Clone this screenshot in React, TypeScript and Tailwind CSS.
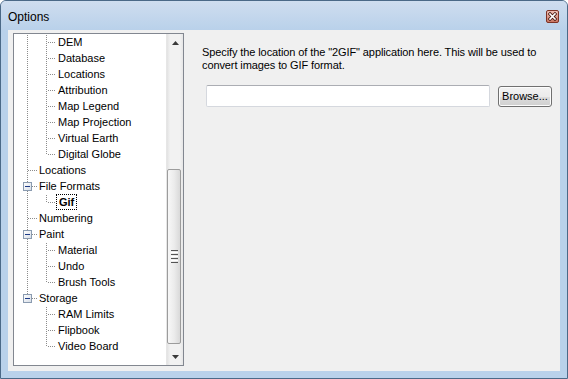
import React from "react";

type Kind = "pipe" | "tee" | "ell" | "blank" | "boxtee" | "boxell";

const DOT = "#8c8c8c";

function TreeCell({ kind, start }: { kind: Kind; start: number }) {
  const rects: React.ReactElement[] = [];
  const v = (y0: number, y1: number) => {
    for (let y = y0; y <= y1; y += 2) rects.push(<rect key={`v${y}`} x={9} y={y} width={1} height={1} fill={DOT} />);
  };
  const h = (x0: number, x1: number) => {
    for (let x = x0; x <= x1; x++) {
      if ((start + x) % 2 === 0) rects.push(<rect key={`h${x}`} x={x} y={8} width={1} height={1} fill={DOT} />);
    }
  };
  let box = false;
  if (kind === "pipe") v(1, 15);
  if (kind === "tee") {
    v(1, 15);
    h(10, 18);
  }
  if (kind === "ell") {
    v(1, 7);
    h(10, 18);
  }
  if (kind === "boxtee") {
    v(1, 3);
    v(13, 15);
    h(14, 18);
    box = true;
  }
  if (kind === "boxell") {
    v(1, 3);
    h(14, 18);
    box = true;
  }
  return (
    <svg width={19} height={16} className="block shrink-0" shapeRendering="crispEdges">
      <defs>
        <linearGradient id="bx" x1="0" y1="0" x2="1" y2="1">
          <stop offset="0" stopColor="#ffffff" />
          <stop offset="1" stopColor="#d6dde6" />
        </linearGradient>
      </defs>
      {rects}
      {box && (
        <>
          <rect x={5.5} y={4.5} width={8} height={8} fill="url(#bx)" stroke="#8a9bb0" />
          <rect x={7} y={8} width={5} height={1} fill="#1c3a86" />
        </>
      )}
    </svg>
  );
}

type Row = { label: string; cells: Kind[]; focus?: boolean };

const rows: Row[] = [
  { label: "DEM", cells: ["pipe", "tee"] },
  { label: "Database", cells: ["pipe", "tee"] },
  { label: "Locations", cells: ["pipe", "tee"] },
  { label: "Attribution", cells: ["pipe", "tee"] },
  { label: "Map Legend", cells: ["pipe", "tee"] },
  { label: "Map Projection", cells: ["pipe", "tee"] },
  { label: "Virtual Earth", cells: ["pipe", "tee"] },
  { label: "Digital Globe", cells: ["pipe", "ell"] },
  { label: "Locations", cells: ["tee"] },
  { label: "File Formats", cells: ["boxtee"] },
  { label: "Gif", cells: ["pipe", "ell"], focus: true },
  { label: "Numbering", cells: ["tee"] },
  { label: "Paint", cells: ["boxtee"] },
  { label: "Material", cells: ["pipe", "tee"] },
  { label: "Undo", cells: ["pipe", "tee"] },
  { label: "Brush Tools", cells: ["pipe", "ell"] },
  { label: "Storage", cells: ["boxell"] },
  { label: "RAM Limits", cells: ["blank", "tee"] },
  { label: "Flipbook", cells: ["blank", "tee"] },
  { label: "Video Board", cells: ["blank", "ell"] },
];

function CloseButton() {
  return (
    <svg width={13} height={13} className="block">
      <defs>
        <linearGradient id="cb" x1="0" y1="0" x2="0" y2="1">
          <stop offset="0" stopColor="#efc2b8" />
          <stop offset="0.5" stopColor="#dd9c8e" />
          <stop offset="1" stopColor="#c8735f" />
        </linearGradient>
      </defs>
      <rect x={0.5} y={0.5} width={12} height={12} rx={1.5} fill="url(#cb)" stroke="#7e3326" />
      <path d="M4 4 L9 9 M9 4 L4 9" stroke="#4a1c14" strokeWidth={3.2} strokeLinecap="square" />
      <path d="M4 4 L9 9 M9 4 L4 9" stroke="#ffffff" strokeWidth={1.6} strokeLinecap="square" />
    </svg>
  );
}

function Arrow({ down }: { down?: boolean }) {
  return (
    <svg width={7} height={4} className="block">
      <polygon points={down ? "0,0 7,0 3.5,4" : "3.5,0 7,4 0,4"} fill="#3a3a3a" />
    </svg>
  );
}

function Scrollbar() {
  return (
    <div className="w-[17px] h-full flex flex-col bg-[linear-gradient(to_right,#e2e2e2,#f2f2f2_20%,#f2f2f2_80%,#e6e6e6)] border-l border-[#e6e6e6]">
      <div className="h-[17px] flex items-center justify-center shrink-0">
        <Arrow />
      </div>
      <div className="flex-1 flex flex-col">
        <div className="h-[118px] shrink-0" />
        <div className="w-[14px] h-[175px] rounded-[2px] border border-[#9c9c9c] bg-[linear-gradient(to_right,#f7f7f7,#ececec_50%,#d9d9d9)] flex items-center justify-center">
          <div className="flex flex-col gap-[1px]">
            <div className="w-[7px] h-[1px] bg-[#555]" />
            <div className="w-[7px] h-[1px] bg-[#fff]" />
            <div className="w-[7px] h-[1px] bg-[#555]" />
            <div className="w-[7px] h-[1px] bg-[#fff]" />
            <div className="w-[7px] h-[1px] bg-[#555]" />
            <div className="w-[7px] h-[1px] bg-[#fff]" />
            <div className="w-[7px] h-[1px] bg-[#555]" />
          </div>
        </div>
      </div>
      <div className="h-[17px] flex items-center justify-center shrink-0">
        <Arrow down />
      </div>
    </div>
  );
}

export default function App() {
  return (
    <div className="w-[568px] h-[379px] font-['Liberation_Sans',Arial,sans-serif] text-black bg-[#b9d1ea] border border-[#4b6987] rounded-t-[6px] flex flex-col overflow-hidden">
      <div className="h-[29px] shrink-0 flex items-center justify-between pl-[7px] pr-[8px] pt-[2px] bg-[linear-gradient(to_bottom,#cfddef,#b9d1ea)]">
        <span className="text-[12px] leading-[14px]">Options</span>
        <CloseButton />
      </div>
      <div className="mx-[7px] h-[341px] bg-[#f0f0f0] flex items-start pt-[3px] pl-[5px]">
        <div className="w-[171px] h-[333px] border border-[#828790] bg-white flex shrink-0">
          <div className="flex-1 flex flex-col pl-[4px] text-[11px] leading-[16px]">
            {rows.map((r, i) => (
              <div key={i} className="h-4 flex items-center">
                {r.cells.map((c, j) => (
                  <TreeCell key={j} kind={c} start={18 + j * 19} />
                ))}
                {r.focus ? (
                  <span className="h-4 px-[2px] border border-dotted border-black font-bold leading-[14px] whitespace-nowrap">{r.label}</span>
                ) : (
                  <span className="h-4 pl-[2px] whitespace-nowrap">{r.label}</span>
                )}
              </div>
            ))}
          </div>
          <Scrollbar />
        </div>
        <div className="ml-[18px] pt-[13px] flex flex-col">
          <p className="text-[11px] leading-[13px] tracking-[-0.1px] whitespace-nowrap">
            Specify the location of the &quot;2GIF&quot; application here. This will be used to
            <br />
            convert images to GIF format.
          </p>
          <div className="mt-[13px] ml-[4px] flex items-start">
            <div className="w-[284px] h-[22px] bg-white border border-[#d5d8de] border-t-[#abadb3] rounded-[2px]" />
            <button className="ml-[8px] mt-[1px] w-[54px] h-[21px] rounded-[3px] border border-[#707070] bg-[linear-gradient(to_bottom,#f2f2f2_0%,#ebebeb_50%,#dddddd_50%,#cfcfcf_100%)] text-[11px] leading-[13px] shadow-[inset_0_0_0_1px_#fcfcfc]">
              Browse...
            </button>
          </div>
        </div>
      </div>
    </div>
  );
}
